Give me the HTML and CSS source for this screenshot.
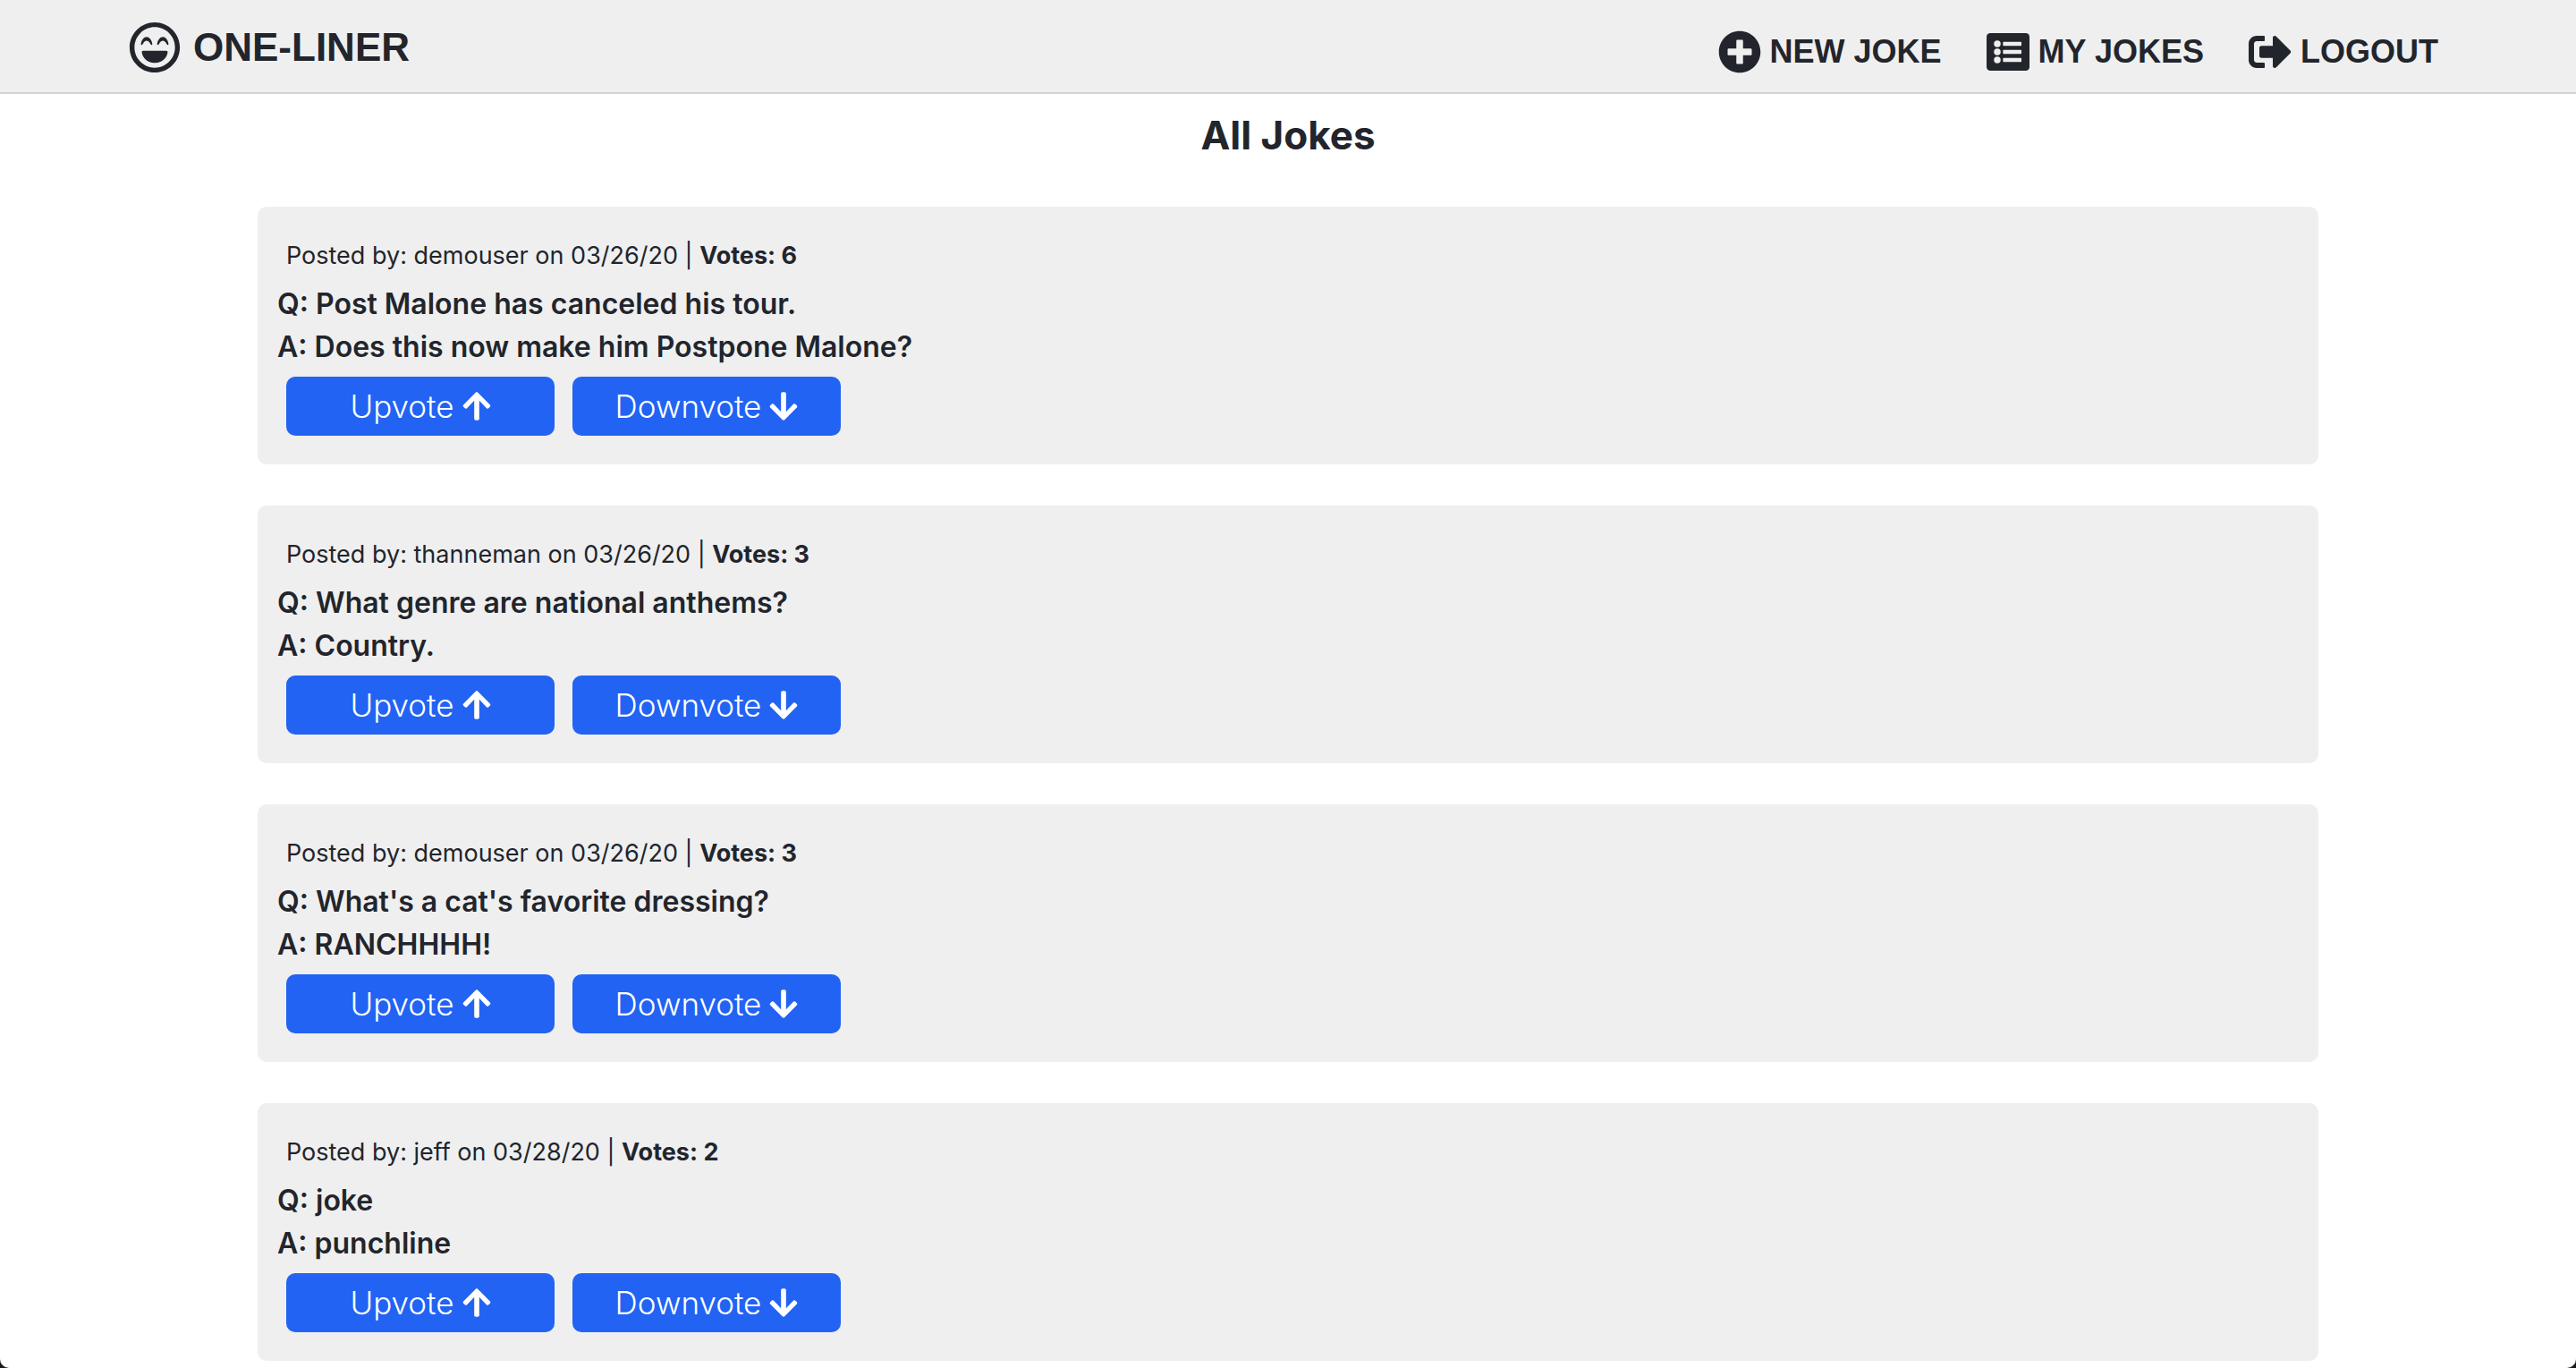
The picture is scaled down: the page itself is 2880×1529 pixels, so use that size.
FILE: index.html
```html
<!DOCTYPE html>
<html lang="en">
<head>
<meta charset="utf-8">
<meta name="viewport" content="width=device-width, initial-scale=1">
<title>One-Liner</title>
<link rel="stylesheet" href="styles.css">
</head>
<body>
<svg class="sprite" aria-hidden="true">
  <symbol id="laugh" viewBox="0 0 496 512"><path d="M248 8C111 8 0 119 0 256s111 248 248 248 248-111 248-248S385 8 248 8zm141.400 389.400c-37.800 37.800-88 58.600-141.400 58.600s-103.600-20.800-141.400-58.600S48 309.400 48 256s20.800-103.600 58.600-141.400S194.600 56 248 56s103.600 20.800 141.400 58.600S448 202.600 448 256s-20.800 103.600-58.600 141.400zM328 152c-23.800 0-52.700 29.300-56 71.400-.7 8.600 10.800 11.900 14.900 4.500l9.500-17c7.700-13.700 19.200-21.600 31.500-21.600s23.800 7.900 31.500 21.600l9.500 17c4.100 7.400 15.600 4 14.900-4.500-3.100-42.100-32-71.400-55.800-71.400zm-201 75.900l9.500-17c7.700-13.700 19.200-21.600 31.500-21.600s23.800 7.900 31.500 21.600l9.500 17c4.100 7.400 15.600 4 14.900-4.500-3.300-42.100-32.200-71.400-56-71.400s-52.700 29.300-56 71.400c-.6 8.500 10.900 11.900 15.100 4.500zM362.400 288H133.600c-8.200 0-14.500 7-13.500 15 7.500 59.200 58.900 105 121.100 105h13.600c62.200 0 113.600-45.800 121.100-105 1-8-5.300-15-13.500-15z"/></symbol>
  <symbol id="plus" viewBox="0 0 512 512"><path d="M256 8C119 8 8 119 8 256s111 248 248 248 248-111 248-248S393 8 256 8zm144 276c0 6.600-5.400 12-12 12h-92v92c0 6.600-5.400 12-12 12h-56c-6.600 0-12-5.400-12-12v-92h-92c-6.600 0-12-5.400-12-12v-56c0-6.600 5.400-12 12-12h92v-92c0-6.600 5.400-12 12-12h56c6.600 0 12 5.400 12 12v92h92c6.600 0 12 5.400 12 12v56z"/></symbol>
  <symbol id="list" viewBox="0 0 512 512"><rect y="32" width="512" height="448" rx="44"/><g class="cutout"><circle cx="128" cy="160" r="40"/><circle cx="128" cy="256" r="40"/><circle cx="128" cy="352" r="40"/><rect x="196" y="136" width="220" height="48" rx="8"/><rect x="196" y="232" width="220" height="48" rx="8"/><rect x="196" y="328" width="220" height="48" rx="8"/></g></symbol>
  <symbol id="exit" viewBox="0 0 512 512"><path d="M497 273L329 441c-15 15-41 4.500-41-17v-96H152c-13.300 0-24-10.700-24-24v-96c0-13.300 10.700-24 24-24h136V88c0-21.400 25.900-32 41-17l168 168c9.300 9.400 9.300 24.600 0 34zM192 436v-40c0-6.600-5.400-12-12-12H96c-17.700 0-32-14.300-32-32V160c0-17.700 14.300-32 32-32h84c6.600 0 12-5.400 12-12V76c0-6.600-5.400-12-12-12H96c-53 0-96 43-96 96v192c0 53 43 96 96 96h84c6.600 0 12-5.400 12-12z"/></symbol>
  <symbol id="up" viewBox="0 0 448 512"><path d="M34.900 289.500l-22.200-22.200c-9.400-9.400-9.400-24.600 0-33.900L207 39c9.400-9.400 24.600-9.400 33.900 0l194.300 194.300c9.400 9.400 9.400 24.600 0 33.900L413 289.400c-9.500 9.500-25 9.300-34.300-.4L264 168.600V456c0 13.300-10.700 24-24 24h-32c-13.300 0-24-10.700-24-24V168.600L69.200 289.100c-9.300 9.800-24.800 10-34.300.4z"/></symbol>
  <symbol id="down" viewBox="0 0 448 512"><path transform="matrix(1 0 0 -1 0 512)" d="M34.900 289.500l-22.200-22.200c-9.400-9.400-9.400-24.600 0-33.900L207 39c9.400-9.400 24.600-9.400 33.900 0l194.300 194.300c9.400 9.400 9.400 24.600 0 33.900L413 289.400c-9.500 9.500-25 9.300-34.300-.4L264 168.600V456c0 13.300-10.700 24-24 24h-32c-13.300 0-24-10.700-24-24V168.600L69.200 289.100c-9.300 9.800-24.800 10-34.300.4z"/></symbol>
</svg>
<header class="site-header">
  <a class="brand" href="#"><svg class="brand-icon" aria-hidden="true"><use href="#laugh"/></svg>ONE-LINER</a>
  <nav class="site-nav">
    <a href="#new"><svg class="nav-icon" aria-hidden="true"><use href="#plus"/></svg>NEW JOKE</a>
    <a href="#mine"><svg class="nav-icon" aria-hidden="true"><use href="#list"/></svg>MY JOKES</a>
    <a href="#logout"><svg class="nav-icon" aria-hidden="true"><use href="#exit"/></svg>LOGOUT</a>
  </nav>
</header>
<main class="jokes">
  <h1>All Jokes</h1>
  <article class="joke">
    <p class="meta">Posted by: demouser on 03/26/20 | <strong>Votes: 6</strong></p>
    <p class="line">Q: Post Malone has canceled his tour.</p>
    <p class="line">A: Does this now make him Postpone Malone?</p>
    <div class="votes">
      <button type="button">Upvote <svg class="arrow" aria-hidden="true"><use href="#up"/></svg></button>
      <button type="button">Downvote <svg class="arrow" aria-hidden="true"><use href="#down"/></svg></button>
    </div>
  </article>
  <article class="joke">
    <p class="meta">Posted by: thanneman on 03/26/20 | <strong>Votes: 3</strong></p>
    <p class="line">Q: What genre are national anthems?</p>
    <p class="line">A: Country.</p>
    <div class="votes">
      <button type="button">Upvote <svg class="arrow" aria-hidden="true"><use href="#up"/></svg></button>
      <button type="button">Downvote <svg class="arrow" aria-hidden="true"><use href="#down"/></svg></button>
    </div>
  </article>
  <article class="joke">
    <p class="meta">Posted by: demouser on 03/26/20 | <strong>Votes: 3</strong></p>
    <p class="line">Q: What's a cat's favorite dressing?</p>
    <p class="line">A: RANCHHHH!</p>
    <div class="votes">
      <button type="button">Upvote <svg class="arrow" aria-hidden="true"><use href="#up"/></svg></button>
      <button type="button">Downvote <svg class="arrow" aria-hidden="true"><use href="#down"/></svg></button>
    </div>
  </article>
  <article class="joke">
    <p class="meta">Posted by: jeff on 03/28/20 | <strong>Votes: 2</strong></p>
    <p class="line">Q: joke</p>
    <p class="line">A: punchline</p>
    <div class="votes">
      <button type="button">Upvote <svg class="arrow" aria-hidden="true"><use href="#up"/></svg></button>
      <button type="button">Downvote <svg class="arrow" aria-hidden="true"><use href="#down"/></svg></button>
    </div>
  </article>
</main>
</body>
</html>
```
FILE: styles.css
```css
* {
  box-sizing: border-box;
}

html {
  background: #161a19;
}

body {
  margin: 0;
  min-height: 100vh;
  background: #fff;
  border-radius: 0 0 10px 10px;
  color: #22252c;
  font-family: Inter, "Liberation Sans", sans-serif;
}

.sprite {
  display: none;
}

svg {
  fill: currentColor;
  flex: none;
}

.cutout {
  fill: #efefef;
}

.site-header {
  display: flex;
  justify-content: space-between;
  align-items: center;
  padding: 20px 5% 18px;
  background: #efefef;
  border-bottom: 2px solid #d3d3d3;
  font-family: "Liberation Sans", Arial, sans-serif;
  font-weight: 700;
}

.site-header a {
  display: flex;
  align-items: center;
  color: inherit;
  text-decoration: none;
}

.brand {
  gap: 14px;
  font-size: 44px;
  line-height: 65px;
}

.brand-icon {
  width: 58px;
  height: 58px;
}

.site-nav {
  display: flex;
  gap: 50px;
  padding: 10px 10px 0 0;
  font-size: 36px;
}

.site-nav a {
  gap: 10px;
}

.nav-icon {
  width: 48px;
  height: 48px;
}

.jokes {
  display: flex;
  flex-direction: column;
  gap: 46px;
  padding: 14px 10% 8px;
}

h1 {
  margin: 0 0 2px;
  font-size: 44px;
  line-height: 64px;
  text-align: center;
}

.joke {
  padding: 37px 22px 32px;
  background: #efefef;
  border-radius: 10px;
}

p {
  margin: 0;
}

.meta {
  padding: 0 10px;
  margin-bottom: 12px;
  font-size: 27px;
  line-height: 36px;
}

.line {
  font-size: 32px;
  font-weight: 600;
  line-height: 48px;
}

.votes {
  display: flex;
  gap: 20px;
  padding: 9px 10px 0;
}

button {
  display: flex;
  align-items: center;
  justify-content: center;
  gap: 9px;
  width: 300px;
  height: 66px;
  padding: 0;
  border: 0;
  border-radius: 10px;
  background: #2263f3;
  color: #fff;
  font: 300 35px Inter, sans-serif;
}

.arrow {
  width: 32px;
  height: 36px;
}
```
